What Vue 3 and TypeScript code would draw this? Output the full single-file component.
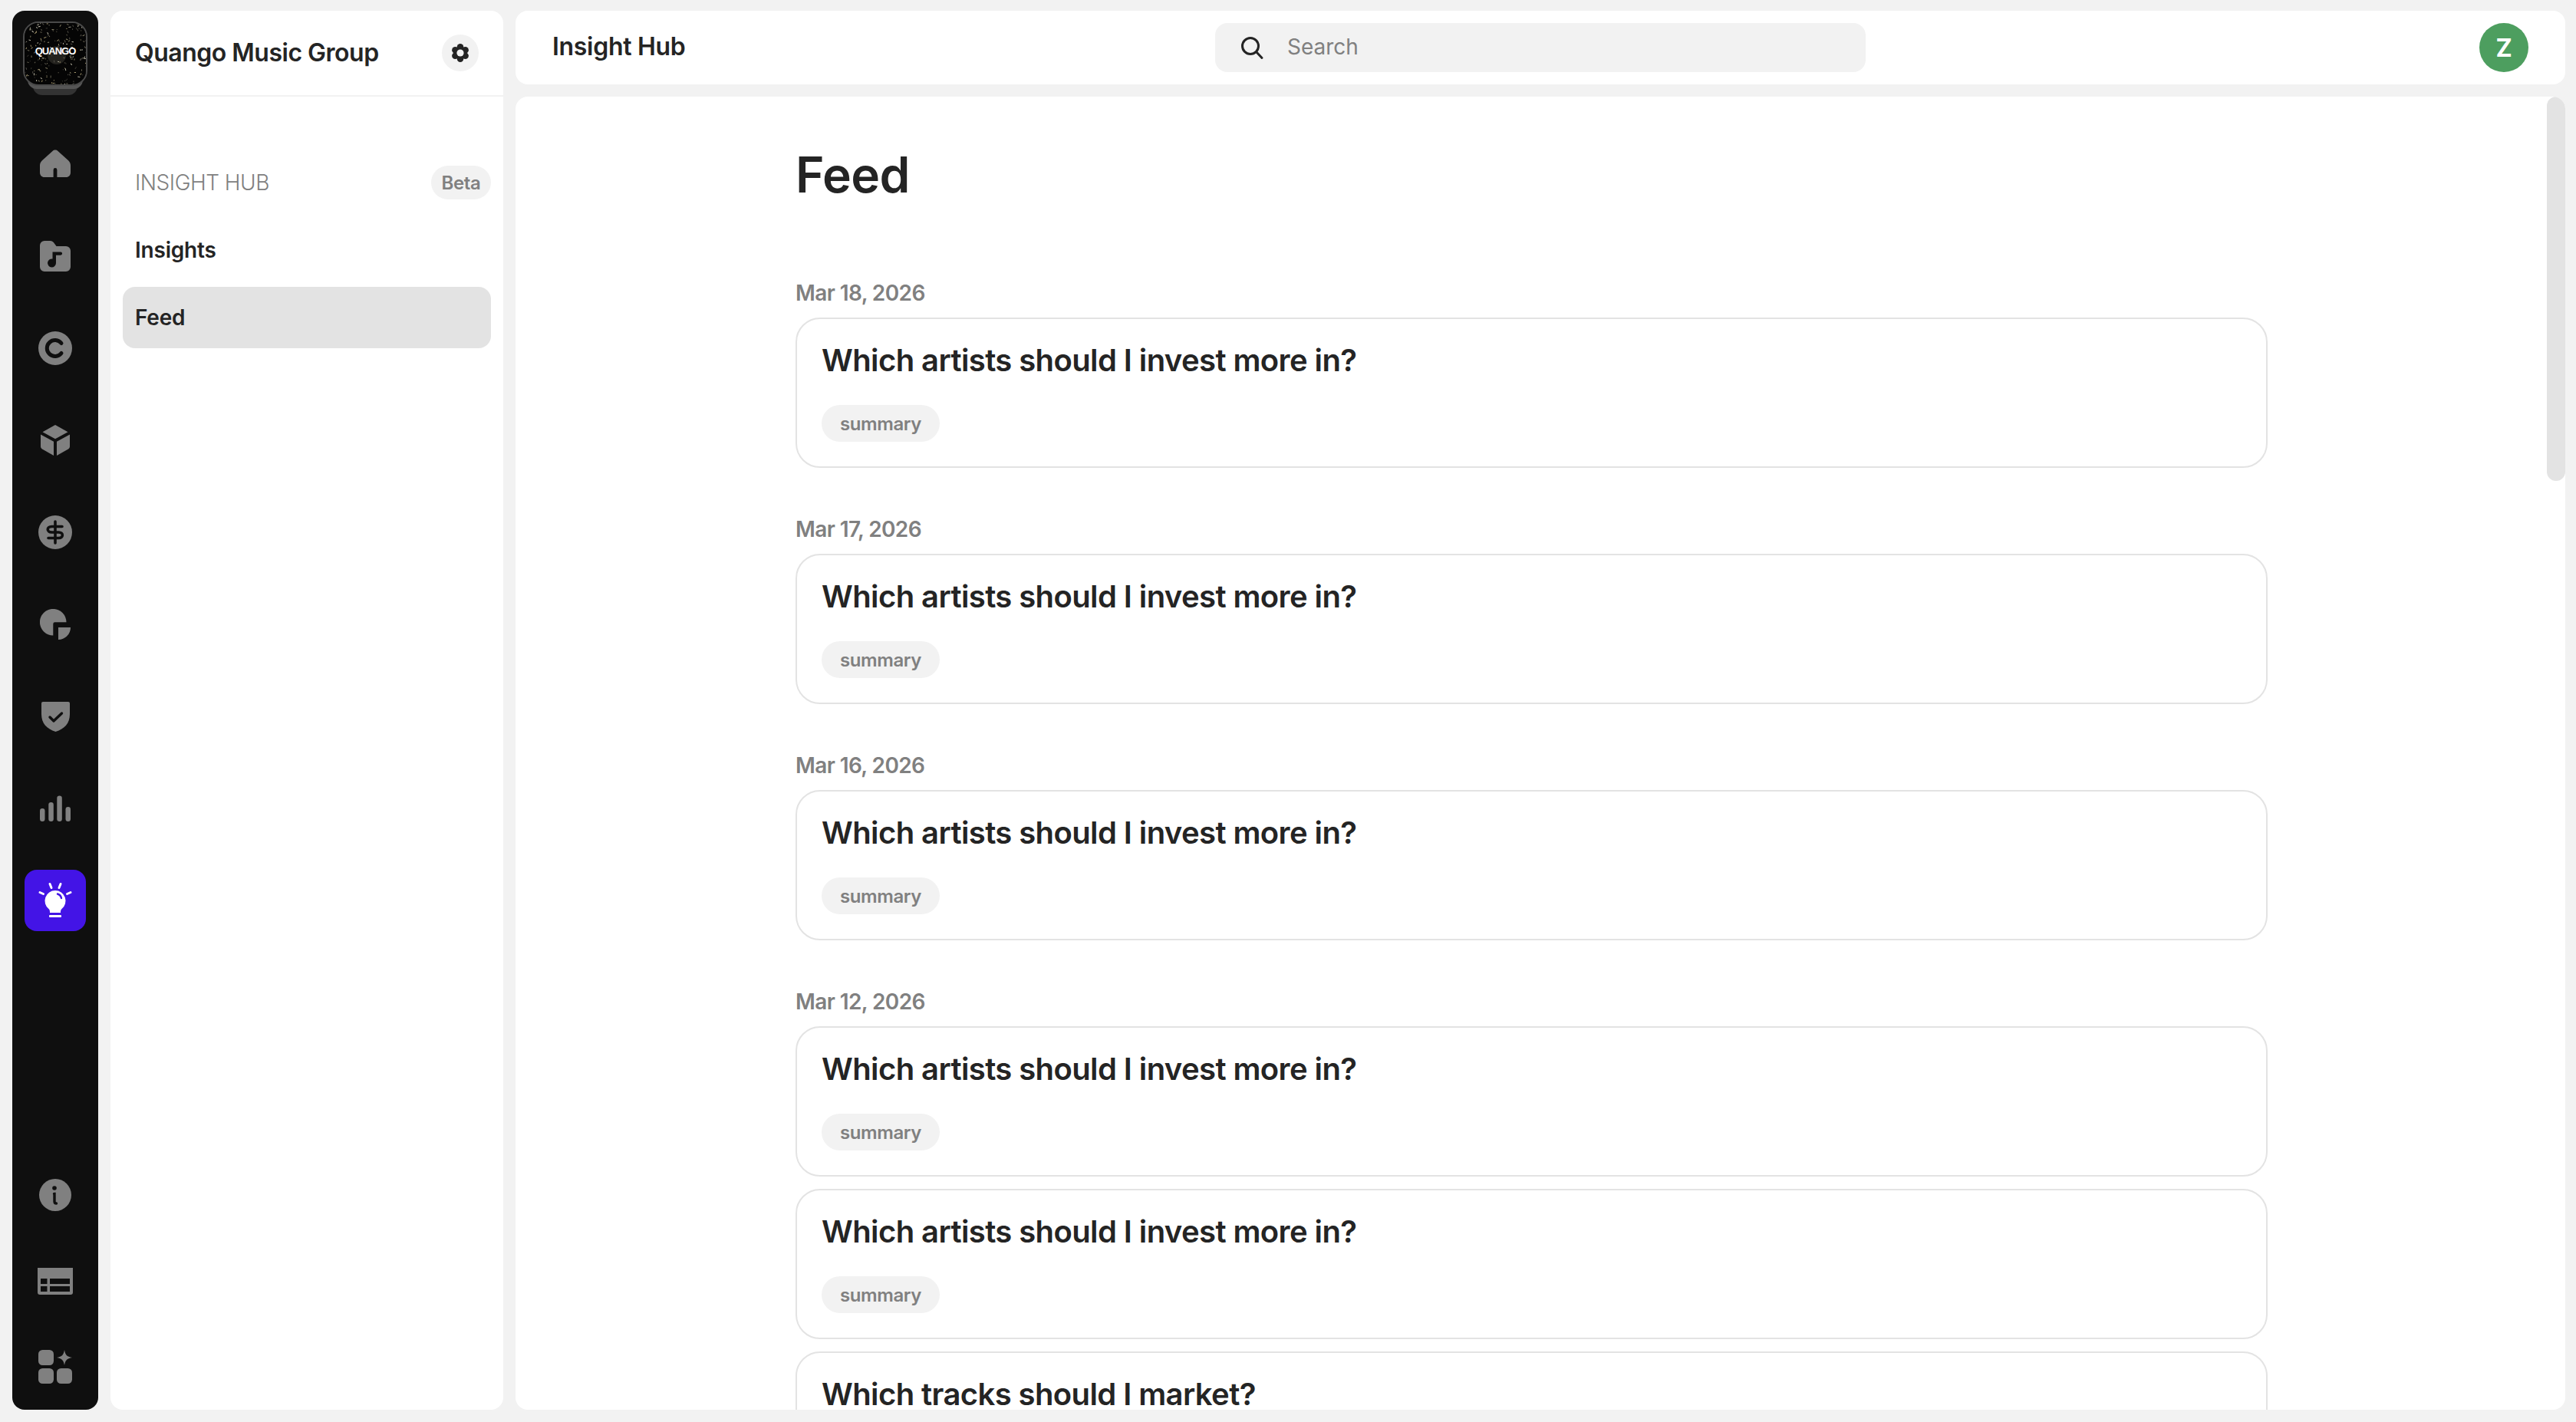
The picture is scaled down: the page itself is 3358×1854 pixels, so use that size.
<script setup lang="ts">
interface Card { title: string }
interface Group { date: string; cards: Card[] }

const groups: Group[] = [
  { date: 'Mar 18, 2026', cards: [{ title: 'Which artists should I invest more in?' }] },
  { date: 'Mar 17, 2026', cards: [{ title: 'Which artists should I invest more in?' }] },
  { date: 'Mar 16, 2026', cards: [{ title: 'Which artists should I invest more in?' }] },
  {
    date: 'Mar 12, 2026',
    cards: [
      { title: 'Which artists should I invest more in?' },
      { title: 'Which artists should I invest more in?' },
      { title: 'Which tracks should I market?' },
    ],
  },
]

// Deterministic speckle texture for the label artwork.
let seed = 7
const rnd = () => {
  seed = (seed * 16807) % 2147483647
  return seed / 2147483647
}
const tints = ['#8a8468', '#6f6a58', '#55524a', '#a89a70', '#3d3b34', '#c8c4b0']
const speckles = Array.from({ length: 260 }, () => {
  const a = rnd() * Math.PI * 2
  const r = Math.sqrt(rnd()) * 52
  return {
    x: 40 + Math.cos(a) * r,
    y: 38 + Math.sin(a) * r,
    w: 0.8 + rnd() * 2.6,
    r: rnd() * 180,
    c: tints[Math.floor(rnd() * tints.length)],
  }
})

const gearLobes = [90, 30, -30, -90, -150, 150].map((d) => ({
  x: 12 + Math.cos((d * Math.PI) / 180) * 7.6,
  y: 12 - Math.sin((d * Math.PI) / 180) * 7.6,
}))
</script>

<template>
  <div class="shell">
    <nav class="rail">
      <div class="logo-stack">
        <div class="logo">
          <svg class="logo-art" viewBox="0 0 80 80">
            <rect width="80" height="80" fill="#050505" />
            <ellipse cx="42" cy="42" rx="12" ry="12" fill="#4a483f" opacity=".45" />
            <rect
              v-for="(s, i) in speckles"
              :key="i"
              :x="s.x"
              :y="s.y"
              :width="s.w"
              height="0.9"
              :fill="s.c"
              :transform="`rotate(${s.r} ${s.x} ${s.y})`"
            />
          </svg>
          <span class="logo-text">QUANGO</span>
        </div>
        <div class="layer layer-a"></div>
        <div class="layer layer-b"></div>
      </div>

      <div class="rail-top">
        <div class="rail-item">
          <svg width="40" height="40" viewBox="0 0 40 40"><path fill="#808080" d="M20 1.500c1.300 0 2.500.5 3.500 1.400l13.600 12.300c1.900 1.700 2.900 4 2.900 6.500V31c0 3.400-2.400 6-5.800 6H5.800C2.400 37 0 34.400 0 31v-9.300c0-2.500 1-4.800 2.900-6.500L16.500 2.900c1-.9 2.200-1.400 3.500-1.400z"/><path fill="#0f0f0f" d="M17.600 37V27.500a2.400 2.400 0 0 1 4.800 0V37z"/></svg>
        </div>
        <div class="rail-item">
          <svg width="40" height="40" viewBox="0 0 40 40"><path fill="#808080" d="M0 6a6 6 0 0 1 6-6h7.500c1.700 0 3.200.8 4.300 2l3.700 5H34a6 6 0 0 1 6 6v21a6 6 0 0 1-6 6H6a6 6 0 0 1-6-6z"/><path fill="#0f0f0f" d="M16.500 14.500h10.500a2.100 2.100 0 0 1 0 4.200H21v10.300a5.500 5.500 0 1 1-4.500-5.400z"/></svg>
        </div>
        <div class="rail-item">
          <svg width="44" height="44" viewBox="0 0 44 44"><circle cx="22" cy="22" r="22" fill="#808080"/><path fill="none" stroke="#0f0f0f" stroke-width="5" stroke-linecap="round" d="M30 15.500a10.500 10.500 0 1 0 0 13"/></svg>
        </div>
        <div class="rail-item">
          <svg width="38" height="40" viewBox="0 0 38 40"><path fill="#808080" d="M19 0l16.500 9.300L19 18.200 2.500 9.300z"/><path fill="#808080" d="M0 12.500l17 9.300V40L2 31.500c-1.300-.7-2-2-2-3.400z"/><path fill="#808080" d="M38 12.500l-17 9.300V40l15-8.500c1.300-.7 2-2 2-3.400z"/></svg>
        </div>
        <div class="rail-item">
          <svg width="44" height="44" viewBox="0 0 44 44"><circle cx="22" cy="22" r="22" fill="#808080"/><path fill="none" stroke="#0f0f0f" stroke-width="3.600" stroke-linecap="round" d="M22 8v28M31 14.500H17.500c-7 0-7 7.500 0 7.500h9c6.500 0 6.500 7.500 0 7.500H13"/></svg>
        </div>
        <div class="rail-item">
          <svg width="40" height="40" viewBox="0 0 40 40"><path fill="#808080" d="M34.500 17.300A17.300 17.300 0 1 0 17.300 34.500V19.500a2.200 2.200 0 0 1 2.200-2.200z"/><path fill="#808080" d="M24 24h16a16 16 0 0 1-16 16z"/></svg>
        </div>
        <div class="rail-item">
          <svg width="37" height="39" viewBox="0 0 37 39"><path fill="#808080" d="M2 0h33a2 2 0 0 1 2 2v14c0 12-7 19.500-18.500 23C7 35.500 0 28 0 16V2a2 2 0 0 1 2-2z"/><path fill="none" stroke="#0f0f0f" stroke-width="3.400" stroke-linecap="round" stroke-linejoin="round" d="M11 20l5 5 10.500-10"/></svg>
        </div>
        <div class="rail-item">
          <svg width="40" height="34" viewBox="0 0 40 34"><rect x="0" y="17" width="6.500" height="17" rx="3.250" fill="#808080"/><rect x="11.300" y="9" width="6.500" height="25" rx="3.250" fill="#808080"/><rect x="22.300" y="0.500" width="6.500" height="33.500" rx="3.250" fill="#808080"/><rect x="33.500" y="15" width="6.500" height="19" rx="3.250" fill="#808080"/></svg>
        </div>
        <div class="rail-item rail-active">
          <svg width="44" height="48" viewBox="0 0 44 48"><g fill="none" stroke="#fff" stroke-width="3" stroke-linecap="round"><path d="M15 2.500l2 5M29 2.500l-2 5M2 13.500l4.500 2M42 13.500l-4.500 2"/></g><path fill="#fff" d="M22 11a13.500 13.500 0 0 1 8.500 24c-1.500 1.300-1.500 3-1.500 5H15c0-2 0-3.700-1.500-5A13.500 13.500 0 0 1 22 11z"/><rect x="14" y="43" width="16" height="3" rx="1" fill="#fff"/><path fill="none" stroke="#4314e6" stroke-width="2.400" stroke-linecap="round" d="M25 15.500c2.500.7 4.500 2.700 5 5.500"/></svg>
        </div>
      </div>

      <div class="rail-bottom">
        <div class="rail-item">
          <svg width="42" height="42" viewBox="0 0 42 42"><circle cx="21" cy="21" r="21" fill="#808080"/><circle cx="20" cy="12" r="2.800" fill="#0f0f0f"/><path fill="none" stroke="#0f0f0f" stroke-width="3.400" stroke-linecap="round" d="M19.500 19.500h.5v10c0 1.500.7 2.500 2.500 2.500"/></svg>
        </div>
        <div class="rail-item">
          <svg width="46" height="35" viewBox="0 0 46 35"><path fill="#808080" d="M0 0h46v32a3 3 0 0 1-3 3H3a3 3 0 0 1-3-3z"/><g fill="#0f0f0f"><rect x="4" y="14" width="8.500" height="7"/><rect x="16" y="14" width="26" height="7"/><rect x="4" y="24" width="8.500" height="7"/><rect x="16" y="24" width="26" height="7"/></g></svg>
        </div>
        <div class="rail-item">
          <svg width="44" height="44" viewBox="0 0 44 44"><g fill="#808080"><rect x="0" y="0" width="20" height="20" rx="5.500"/><rect x="0" y="24" width="20" height="20" rx="5.500"/><rect x="24" y="24" width="20" height="20" rx="5.500"/><path d="M34 0c1 6 3 9 10 10-7 1-9 4-10 10-1-6-3-9-10-10 7-1 9-4 10-10z"/></g></svg>
        </div>
      </div>
    </nav>

    <aside class="panel">
      <header class="panel-head">
        <span class="org">Quango Music Group</span>
        <button class="gear" type="button" aria-label="Settings">
          <svg width="24" height="24" viewBox="0 0 24 24"><circle cx="12" cy="12" r="8.500" fill="#242424"/><circle v-for="(l, i) in gearLobes" :key="i" :cx="l.x" :cy="l.y" r="4.300" fill="#242424"/><circle cx="12" cy="12" r="4.600" fill="#f2f2f2"/></svg>
        </button>
      </header>
      <div class="panel-body">
        <div class="section-row">
          <span class="section-label">INSIGHT HUB</span>
          <span class="beta">Beta</span>
        </div>
        <a class="nav-link">Insights</a>
        <a class="nav-link nav-current">Feed</a>
      </div>
    </aside>

    <div class="right">
      <header class="topbar">
        <span class="top-title">Insight Hub</span>
        <div class="search">
          <svg width="32" height="32" viewBox="0 0 32 32"><circle cx="14" cy="14" r="10.500" fill="none" stroke="#242424" stroke-width="3"/><path d="M22 22l7 7.500" fill="none" stroke="#242424" stroke-width="3" stroke-linecap="round"/></svg>
          <span class="search-text">Search</span>
        </div>
        <div class="avatar">Z</div>
      </header>

      <main class="main">
        <div class="thumb"></div>
        <div class="content">
          <h1 class="page-title">Feed</h1>
          <section v-for="g in groups" :key="g.date" class="group">
            <div class="date">{{ g.date }}</div>
            <div class="cards">
              <article v-for="(c, i) in g.cards" :key="i" class="card">
                <h2 class="card-title">{{ c.title }}</h2>
                <span class="tag">summary</span>
              </article>
            </div>
          </section>
        </div>
      </main>
    </div>
  </div>
</template>

<style>
html, body { margin: 0; height: 100%; background: #f2f2f2; overflow: hidden; }
</style>

<style scoped>
.shell {
  box-sizing: border-box;
  width: 3358px;
  height: 1854px;
  padding: 14px 14px 16px 16px;
  display: grid;
  grid-template-columns: 112px 512px 1fr;
  gap: 16px;
  background: #f2f2f2;
  font-family: Inter, "Liberation Sans", sans-serif;
  color: #242424;
}
.rail {
  background: #0f0f0f;
  border-radius: 16px;
  display: flex;
  flex-direction: column;
  align-items: center;
  padding: 14px 0 16px;
  min-height: 0;
}
.logo-stack { position: relative; width: 82px; height: 96px; flex: none; }
.logo {
  position: relative;
  z-index: 2;
  box-sizing: border-box;
  width: 84px;
  height: 84px;
  margin-left: -1px;
  border: 2px solid #4a4a4a;
  border-radius: 20px;
  overflow: hidden;
  display: flex;
  align-items: center;
  justify-content: center;
}
.logo-art { position: absolute; inset: 0; width: 100%; height: 100%; }
.logo-text {
  position: relative;
  top: -4px;
  font-family: "Liberation Sans", sans-serif;
  font-size: 13px;
  font-weight: 700;
  letter-spacing: -1px;
  color: #fff;
}
.layer { position: absolute; }
.layer-a { z-index: 1; left: 5px; width: 72px; top: 70px; height: 18px; background: #555; border-radius: 0 0 12px 12px; }
.layer-b { z-index: 0; left: 12px; width: 58px; top: 76px; height: 20px; background: #333; border-radius: 0 0 12px 12px; }
.rail-top { display: flex; flex-direction: column; gap: 40px; margin-top: 50px; }
.rail-bottom { display: flex; flex-direction: column; gap: 32px; margin-top: auto; }
.rail-item { width: 80px; height: 80px; display: flex; align-items: center; justify-content: center; border-radius: 16px; }
.rail-active { background: #4314e6; }

.panel {
  background: #fff;
  border-radius: 16px;
  display: flex;
  flex-direction: column;
  min-height: 0;
}
.panel-head {
  box-sizing: border-box;
  height: 112px;
  flex: none;
  padding: 0 32px;
  display: flex;
  align-items: center;
  justify-content: space-between;
  border-bottom: 2px solid #f2f2f2;
}
.org { font-size: 32px; font-weight: 600; line-height: 40px; letter-spacing: -0.5px; }
.gear {
  width: 48px;
  height: 48px;
  padding: 0;
  border: 0;
  border-radius: 50%;
  background: #f2f2f2;
  display: flex;
  align-items: center;
  justify-content: center;
}
.panel-body { padding: 90px 16px 0; display: flex; flex-direction: column; }
.section-row {
  height: 44px;
  padding-left: 16px;
  display: flex;
  align-items: center;
  justify-content: space-between;
  margin-bottom: 26px;
}
.section-label { font-size: 28px; font-weight: 300; color: #808080; letter-spacing: -0.5px; }
.beta {
  box-sizing: border-box;
  height: 44px;
  width: 78px;
  border-radius: 22px;
  background: #f2f2f2;
  display: flex;
  align-items: center;
  justify-content: center;
  font-size: 24px;
  font-weight: 600;
  letter-spacing: -0.4px;
  color: #808080;
}
.nav-link {
  height: 80px;
  padding-left: 16px;
  margin-bottom: 8px;
  border-radius: 16px;
  display: flex;
  align-items: center;
  font-size: 28px;
  font-weight: 600;
  letter-spacing: -0.2px;
}
.nav-current { background: #e3e3e3; }

.right { display: flex; flex-direction: column; gap: 16px; min-height: 0; min-width: 0; }
.topbar {
  height: 96px;
  flex: none;
  background: #fff;
  border-radius: 16px;
  padding: 0 48px;
  box-sizing: border-box;
  display: grid;
  grid-template-columns: 1fr 848px 1fr;
  align-items: center;
}
.top-title { font-size: 32px; font-weight: 600; letter-spacing: -0.3px; padding-bottom: 4px; }
.search {
  height: 64px;
  border-radius: 16px;
  background: #f2f2f2;
  display: flex;
  align-items: center;
  gap: 30px;
  padding-left: 32px;
}
.search-text { font-size: 28px; color: #808080; padding-bottom: 2px; }
.avatar {
  justify-self: end;
  width: 64px;
  height: 64px;
  border-radius: 50%;
  background: #4d9e5f;
  color: #fff;
  font-size: 32px;
  font-weight: 700;
  display: flex;
  align-items: center;
  justify-content: center;
}
.main {
  position: relative;
  flex: 1;
  min-height: 0;
  background: #fff;
  border-radius: 16px;
  overflow: hidden;
}
.thumb {
  position: absolute;
  top: 0;
  right: 0;
  width: 24px;
  height: 501px;
  background: #e3e3e3;
  border-radius: 12px;
}
.content { padding: 62px 388px 0 365px; }
.page-title { margin: 0 0 94px; font-size: 64px; font-weight: 600; line-height: 80px; letter-spacing: -0.6px; }
.group { margin-bottom: 60px; }
.date { font-size: 28px; font-weight: 600; line-height: 40px; color: #808080; margin-bottom: 12px; letter-spacing: -0.6px; }
.cards { display: flex; flex-direction: column; gap: 16px; }
.card {
  box-sizing: border-box;
  height: 196px;
  flex: none;
  padding: 32px;
  border: 2px solid #e3e3e3;
  border-radius: 32px;
  display: flex;
  flex-direction: column;
  align-items: flex-start;
}
.card-title { margin: 0 0 36px; font-size: 40px; font-weight: 600; line-height: 44px; letter-spacing: -0.6px; }
.tag {
  height: 48px;
  width: 154px;
  border-radius: 24px;
  background: #f2f2f2;
  display: flex;
  align-items: center;
  justify-content: center;
  font-size: 24px;
  font-weight: 600;
  letter-spacing: -0.4px;
  color: #808080;
}
</style>
